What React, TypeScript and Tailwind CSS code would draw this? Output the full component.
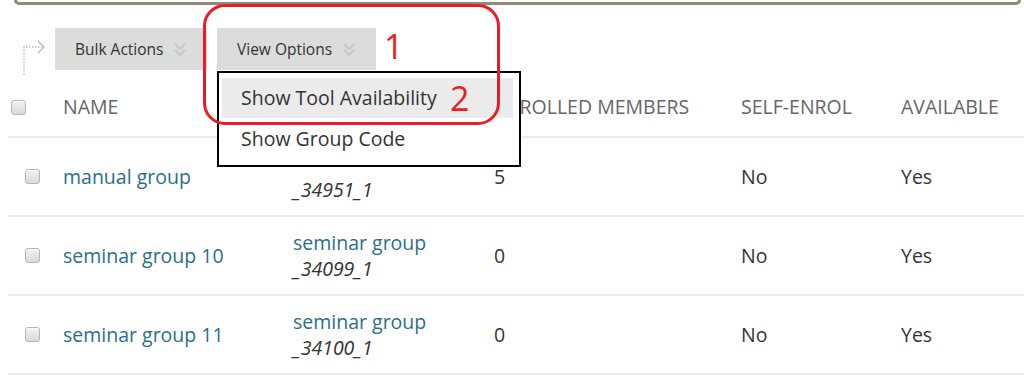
import React from "react";

const font = { fontFamily: '"Open Sans", "Noto Sans", sans-serif' };

function Chevrons() {
  return (
    <svg width="14" height="16" viewBox="0 0 14 16" fill="none" stroke="#c8c8c8" strokeWidth="2.2">
      <path d="M2 2 L7 7 L12 2" />
      <path d="M2 8 L7 13 L12 8" />
    </svg>
  );
}

function Box({ className = "" }: { className?: string }) {
  return (
    <div
      className={`w-[15px] h-[15px] rounded-[3px] border border-[#b5b5b5] bg-gradient-to-b from-[#f3f3f3] to-[#d9d9d9] shadow-[inset_0_1px_0_#fff] ${className}`}
    />
  );
}

const rows = [
  { name: "manual group", code: "_34951_1", members: "5", covered: true },
  { name: "seminar group 10", code: "_34099_1", members: "0", covered: false },
  { name: "seminar group 11", code: "_34100_1", members: "0", covered: false },
];

export default function App() {
  return (
    <div className="relative w-[1024px] h-[379px] bg-white overflow-hidden text-[#333]" style={font}>
      {/* top box bottom */}
      <div className="ml-[14px] mr-[3px] h-[5px] border-x-[3px] border-b-[3px] border-[#8d8b7b] rounded-b-[6px]" />

      {/* action bar */}
      <div className="flex items-start mt-[23px] h-[42px]">
        <svg width="55" height="50" viewBox="0 0 55 50" className="shrink-0 overflow-visible">
          <path d="M24 47 L24 19 L42 19" stroke="#b8b8b8" strokeWidth="1.3" strokeDasharray="1.5 1.5" fill="none" />
          <path d="M38 13 L44 19 L38 25" stroke="#b8b8b8" strokeWidth="1.3" fill="none" />
        </svg>
        <div className="flex gap-[10px]">
          <div className="w-[152px] h-[42px] bg-[#dcdcdc] flex items-center pl-[20px] pt-[2px] gap-[10px] text-[15.5px] text-[#333]">
            <span>Bulk Actions</span>
            <Chevrons />
          </div>
          <div className="w-[159px] h-[42px] bg-[#dcdcdc] flex items-center pl-[20px] pt-[2px] gap-[10px] text-[15.5px] text-[#333]">
            <span>View Options</span>
            <Chevrons />
          </div>
        </div>
        <span className="ml-[8px] mt-[-4px] text-[34px] leading-[44px] text-[#ec1c24]">1</span>
      </div>

      {/* table */}
      <div className="ml-[8px] mt-[8px]">
        <div className="grid grid-cols-[55px_230px_201px_247px_160px_1fr] items-center h-[60px] border-b-2 border-[#ebebeb] text-[19.5px] text-[#666] uppercase">
          <div className="pl-[3px]"><Box /></div>
          <div>Name</div>
          <div className="invisible">Group Code</div>
          <div>Enrolled Members</div>
          <div>Self-Enrol</div>
          <div>Available</div>
        </div>
        {rows.map((r) => (
          <div
            key={r.code}
            className="grid grid-cols-[55px_230px_201px_247px_160px_1fr] items-center h-[79px] border-b-2 border-[#ebebeb] text-[19.5px]"
          >
            <div className="pl-[17px]"><Box /></div>
            <div className="text-[#2b6f87]">{r.name}</div>
            <div className="leading-[26px]">
              <div className={`text-[#2b6f87] ${r.covered ? "invisible" : ""}`}>seminar group</div>
              <div className="italic text-[#333]">{r.code}</div>
            </div>
            <div>{r.members}</div>
            <div>No</div>
            <div>Yes</div>
          </div>
        ))}
      </div>

      {/* dropdown menu */}
      <div className="absolute left-[217px] top-[71px] w-[304px] h-[96px] bg-white border-2 border-black pt-[5px] pl-[3px] pr-[6px] text-[19.5px] text-[#333]">
        <div className="h-[40px] bg-[#ebebeb] flex items-center pl-[19px]">Show Tool Availability</div>
        <div className="h-[42px] flex items-center pl-[19px]">Show Group Code</div>
      </div>

      {/* annotation */}
      <div className="absolute left-[203px] top-[4px] w-[297px] h-[121px] border-[3px] border-[#ec1c24] rounded-[22px]" />
      <span className="absolute left-[450px] top-[76px] text-[34px] leading-[44px] text-[#ec1c24]">2</span>
    </div>
  );
}
